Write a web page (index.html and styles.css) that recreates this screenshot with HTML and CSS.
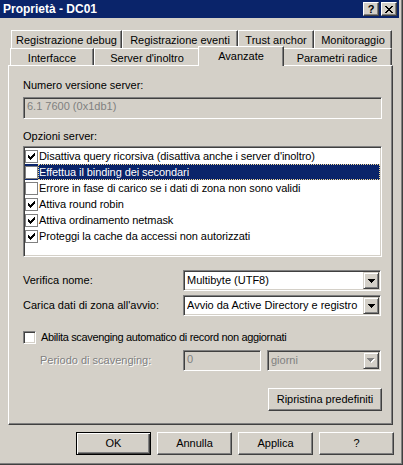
FILE: index.html
```html
<!DOCTYPE html>
<html lang="it">
<head>
<meta charset="utf-8">
<title>Proprietà - DC01</title>
<link rel="stylesheet" href="styles.css">
</head>
<body>
<div class="window">
  <div class="titlebar">
    <span class="title">Proprietà - DC01</span>
    <div class="caption-btns">
      <span class="cbtn">?</span>
      <span class="cbtn"><svg width="8" height="7" viewBox="0 0 8 7" shape-rendering="crispEdges"><path fill="#000" d="M0 0h2v1h-2z M6 0h2v1h-2z M1 1h2v1h-2z M5 1h2v1h-2z M2 2h4v1h-4z M3 3h2v1h-2z M2 4h4v1h-4z M1 5h2v1h-2z M5 5h2v1h-2z M0 6h2v1h-2z M6 6h2v1h-2z"/></svg></span>
    </div>
  </div>

  <div class="tabs">
    <div class="tabrow back">
      <div class="tab w-rd">Registrazione debug</div>
      <div class="tab w-re">Registrazione eventi</div>
      <div class="tab w-ta">Trust anchor</div>
      <div class="tab w-mo">Monitoraggio</div>
    </div>
    <div class="tabrow front">
      <div class="tab w-in">Interfacce</div>
      <div class="tab w-sd">Server d'inoltro</div>
      <div class="tab w-av selected">Avanzate</div>
      <div class="tab w-pr">Parametri radice</div>
    </div>
  </div>

  <div class="panel">
    <div class="label">Numero versione server:</div>
    <div class="edit disabled version">6.1 7600 (0x1db1)</div>

    <div class="label opts">Opzioni server:</div>
    <div class="listbox">
      <div class="lrow"><span class="lcb"><svg class="check" width="7" height="7" viewBox="0 0 7 7" shape-rendering="crispEdges"><path fill="#000" d="M0 2h1v3h-1z M1 3h1v3h-1z M2 4h1v3h-1z M3 3h1v3h-1z M4 2h1v3h-1z M5 1h1v3h-1z M6 0h1v3h-1z"/></svg></span><span class="ltxt">Disattiva query ricorsiva (disattiva anche i server d'inoltro)</span></div>
      <div class="lrow sel"><span class="lcb"></span><span class="ltxt">Effettua il binding dei secondari</span></div>
      <div class="lrow"><span class="lcb"></span><span class="ltxt">Errore in fase di carico se i dati di zona non sono validi</span></div>
      <div class="lrow"><span class="lcb"><svg class="check" width="7" height="7" viewBox="0 0 7 7" shape-rendering="crispEdges"><path fill="#000" d="M0 2h1v3h-1z M1 3h1v3h-1z M2 4h1v3h-1z M3 3h1v3h-1z M4 2h1v3h-1z M5 1h1v3h-1z M6 0h1v3h-1z"/></svg></span><span class="ltxt">Attiva round robin</span></div>
      <div class="lrow"><span class="lcb"><svg class="check" width="7" height="7" viewBox="0 0 7 7" shape-rendering="crispEdges"><path fill="#000" d="M0 2h1v3h-1z M1 3h1v3h-1z M2 4h1v3h-1z M3 3h1v3h-1z M4 2h1v3h-1z M5 1h1v3h-1z M6 0h1v3h-1z"/></svg></span><span class="ltxt">Attiva ordinamento netmask</span></div>
      <div class="lrow"><span class="lcb"><svg class="check" width="7" height="7" viewBox="0 0 7 7" shape-rendering="crispEdges"><path fill="#000" d="M0 2h1v3h-1z M1 3h1v3h-1z M2 4h1v3h-1z M3 3h1v3h-1z M4 2h1v3h-1z M5 1h1v3h-1z M6 0h1v3h-1z"/></svg></span><span class="ltxt">Proteggi la cache da accessi non autorizzati</span></div>
    </div>

    <div class="frow first">
      <span class="flabel">Verifica nome:</span>
      <div class="combo w-full"><span class="ctext">Multibyte (UTF8)</span><span class="dd"><svg width="7" height="4" viewBox="0 0 7 4" shape-rendering="crispEdges"><path fill="#000" d="M0 0h7v1h-7z M1 1h5v1h-5z M2 2h3v1h-3z M3 3h1v1h-1z"/></svg></span></div>
    </div>
    <div class="frow second">
      <span class="flabel">Carica dati di zona all'avvio:</span>
      <div class="combo w-full"><span class="ctext">Avvio da Active Directory e registro</span><span class="dd"><svg width="7" height="4" viewBox="0 0 7 4" shape-rendering="crispEdges"><path fill="#000" d="M0 0h7v1h-7z M1 1h5v1h-5z M2 2h3v1h-3z M3 3h1v1h-1z"/></svg></span></div>
    </div>

    <div class="chkrow">
      <span class="cb3d"></span>
      <span class="chklabel">Abilita scavenging automatico di record non aggiornati</span>
    </div>

    <div class="frow period">
      <span class="flabel indent disabled-label">Periodo di scavenging:</span>
      <div class="edit disabled small">0</div>
      <div class="combo disabled w-unit"><span class="ctext">giorni</span><span class="dd"><svg width="8" height="5" viewBox="0 0 8 5" shape-rendering="crispEdges"><path fill="#fff" d="M1 1h7v1h-7z M2 2h5v1h-5z M3 3h3v1h-3z M4 4h1v1h-1z"/><path fill="#808080" d="M0 0h7v1h-7z M1 1h5v1h-5z M2 2h3v1h-3z M3 3h1v1h-1z"/></svg></span></div>
    </div>

    <div class="restore">
      <div class="btn wide">Ripristina predefiniti</div>
    </div>
  </div>

  <div class="actions">
    <div class="btn default">OK</div>
    <div class="btn">Annulla</div>
    <div class="btn">Applica</div>
    <div class="btn">?</div>
  </div>
</div>
</body>
</html>
```

FILE: styles.css
```css
* { box-sizing: border-box; }

html, body {
  margin: 0;
  padding: 0;
}

body {
  background: #d4d0c8;
  font-family: "Liberation Sans", Arial, sans-serif;
  font-size: 11px;
  line-height: 13px;
  color: #000;
}

.window {
  width: 403px;
  height: 465px;
  background: #d4d0c8;
  border-right: 1px solid #404040;
  border-bottom: 1px solid #404040;
  box-shadow: inset -1px -1px #808080;
  padding: 0 3px 3px 0;
}

/* Title bar */
.titlebar {
  height: 18px;
  background: #0a246a;
  color: #fff;
  display: flex;
  align-items: center;
  padding-left: 3px;
}

.title {
  font-weight: bold;
  font-size: 12px;
  line-height: 18px;
  white-space: nowrap;
}

.caption-btns {
  margin-left: auto;
  display: flex;
  gap: 2px;
  padding-right: 2px;
}

.cbtn {
  width: 16px;
  height: 14px;
  background: #d4d0c8;
  border: 1px solid;
  border-color: #fff #404040 #404040 #fff;
  box-shadow: inset -1px -1px #808080;
  display: flex;
  align-items: center;
  justify-content: center;
  color: #000;
  font-weight: bold;
  font-size: 11px;
  line-height: 11px;
}

/* Tabs */
.tabs {
  margin-top: 12px;
}

.tabrow {
  display: flex;
}

.tabrow.back {
  height: 18px;
  margin-left: 11px;
}

.tabrow.front {
  height: 17px;
  margin-left: 10px;
}

.tab {
  height: 100%;
  flex: none;
  background: #d4d0c8;
  border-top: 1px solid #fff;
  border-left: 1px solid #fff;
  border-right: 1px solid #404040;
  box-shadow: inset -1px 0 #808080;
  text-align: center;
  padding-top: 3px;
  white-space: nowrap;
}

.tab.selected {
  height: 20px;
  margin: -2px -2px 0;
  position: relative;
  z-index: 1;
}

.w-rd { width: 111px; }
.w-re { width: 116px; }
.w-ta { width: 76px; }
.w-mo { width: 78px; }
.w-in { width: 84px; }
.w-sd { width: 106px; }
.w-av { width: 86px; }
.w-pr { width: 110px; }

/* Panel */
.panel {
  margin-left: 8px;
  width: 385px;
  height: 360px;
  border-top: 1px solid #fff;
  border-left: 1px solid #fff;
  border-right: 1px solid #404040;
  border-bottom: 1px solid #404040;
  box-shadow: inset -1px -1px #808080;
  padding: 13px 10px 0 14px;
}

.label {
  height: 13px;
  white-space: nowrap;
}

.label.opts {
  margin-top: 11px;
}

.edit {
  height: 22px;
  background: #fff;
  border: 1px solid;
  border-color: #808080 #fff #fff #808080;
  box-shadow: inset 1px 1px #404040, inset -1px -1px #d4d0c8;
  padding: 2px 3px 0;
  white-space: nowrap;
}

.edit.version {
  margin-top: 5px;
}

.edit.disabled {
  background: #d4d0c8;
  color: #808080;
}

.edit.small {
  width: 78px;
  height: 21px;
  margin-right: 6px;
}

/* List with checkboxes */
.listbox {
  margin-top: 3px;
  height: 111px;
  background: #fff;
  border: 1px solid;
  border-color: #808080 #fff #fff #808080;
  box-shadow: inset 1px 1px #404040, inset -1px -1px #d4d0c8;
  padding: 1px;
  letter-spacing: -0.08px;
}

.lrow {
  height: 16px;
  display: flex;
  align-items: center;
  white-space: nowrap;
}

.lcb {
  flex: none;
  width: 13px;
  height: 13px;
  background: #fff;
  border: 1px solid #808080;
  display: flex;
  align-items: center;
  justify-content: center;
}

.ltxt {
  border: 1px solid transparent;
  line-height: 14px;
}

.lrow.sel {
  background: #0a246a;
  color: #fff;
}

.lrow.sel .ltxt {
  flex: 1;
  align-self: stretch;
  border: 1px dotted #f5db95;
}

/* Form rows */
.frow {
  display: flex;
  align-items: center;
}

.frow.first {
  margin-top: 13px;
}

.frow.second {
  margin-top: 4px;
}

.frow.period {
  margin-top: 6px;
}

.flabel {
  width: 160px;
  flex: none;
  white-space: nowrap;
}

.flabel.indent {
  padding-left: 17px;
}

.disabled-label {
  color: #808080;
  text-shadow: 1px 1px 0 #fff;
}

.combo {
  height: 21px;
  background: #fff;
  border: 1px solid;
  border-color: #808080 #fff #fff #808080;
  box-shadow: inset 1px 1px #404040, inset -1px -1px #d4d0c8;
  padding: 1px 1px 1px 3px;
  display: flex;
  align-items: center;
  white-space: nowrap;
}

.combo.w-full {
  width: 198px;
}

.combo.w-unit {
  width: 114px;
}

.combo.disabled {
  background: #d4d0c8;
  color: #808080;
}

.ctext {
  flex: 1;
  overflow: hidden;
}

.dd {
  flex: none;
  width: 16px;
  height: 17px;
  background: #d4d0c8;
  border: 1px solid;
  border-color: #d4d0c8 #404040 #404040 #d4d0c8;
  box-shadow: inset 1px 1px #fff, inset -1px -1px #808080;
  display: flex;
  align-items: center;
  justify-content: center;
}

.chkrow {
  margin-top: 15px;
  height: 13px;
  display: flex;
  align-items: center;
}

.cb3d {
  flex: none;
  width: 13px;
  height: 13px;
  background: #fff;
  border: 1px solid;
  border-color: #808080 #fff #fff #808080;
  box-shadow: inset 1px 1px #404040, inset -1px -1px #d4d0c8;
}

.chklabel {
  margin-left: 5px;
  white-space: nowrap;
  letter-spacing: -0.35px;
}

.restore {
  margin-top: 17px;
  display: flex;
  justify-content: flex-end;
}

/* Buttons */
.btn {
  width: 75px;
  height: 23px;
  flex: none;
  background: #d4d0c8;
  border: 1px solid;
  border-color: #fff #404040 #404040 #fff;
  box-shadow: inset -1px -1px #808080;
  display: flex;
  align-items: center;
  justify-content: center;
  white-space: nowrap;
}

.btn.wide {
  width: 114px;
}

.btn.default {
  border-color: #000;
  box-shadow: inset 1px 1px #fff, inset -1px -1px #404040, inset -2px -2px #808080;
}

.actions {
  margin-top: 7px;
  display: flex;
  justify-content: flex-end;
  gap: 6px;
  padding-right: 5px;
}
```
